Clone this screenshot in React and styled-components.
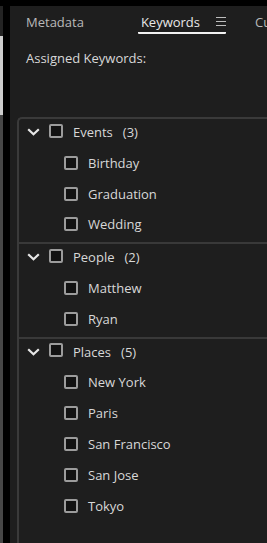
import React from "react";
import styled, { createGlobalStyle } from "styled-components";

const Global = createGlobalStyle`
  html, body { margin: 0; padding: 0; background: #000; }
  body { font-family: "Open Sans", "Noto Sans", sans-serif; }
  * { box-sizing: border-box; }
`;

const Page = styled.div`
  display: flex;
  height: 543px;
  padding-top: 6px;
  background: #000;
  overflow: hidden;
`;

const ScrollStrip = styled.div`
  width: 3px;
  display: flex;
  flex-direction: column;
  margin-right: 7px;
`;

const StripPart = styled.div`
  height: ${(p) => (p.$h ? `${p.$h}px` : "auto")};
  flex: ${(p) => (p.$h ? "none" : "1")};
  background: ${(p) => p.$c};
`;

const Panel = styled.div`
  flex: 1;
  min-width: 0;
  background: #1e1e1e;
  display: flex;
  flex-direction: column;
  overflow: hidden;
`;

const TabBar = styled.div`
  height: 28px;
  display: flex;
  align-items: stretch;
  padding-left: 16px;
  white-space: nowrap;
`;

const Tab = styled.div`
  display: flex;
  align-items: center;
  gap: 16px;
  height: 28px;
  padding: 5px 0 0 ${(p) => (p.$active ? "3px" : "0")};
  margin-right: ${(p) => p.$mr || 0}px;
  font-size: 13px;
  color: ${(p) => (p.$active ? "#e8e8e8" : "#b9b9b9")};
  border-bottom: 2px solid ${(p) => (p.$active ? "#f2f2f2" : "transparent")};
  border-radius: 1px;
`;

const Menu = styled.svg`
  display: block;
  flex: none;
`;

const Assigned = styled.div`
  height: 83px;
  padding: 15px 16px 0;
  font-size: 13px;
  color: #d8d8d8;
`;

const TreeBox = styled.div`
  flex: 1;
  margin-left: 7px;
  margin-right: -20px;
  border-top: 2px solid #3a3a3a;
  border-left: 2px solid #3a3a3a;
  border-top-left-radius: 5px;
  background: #1e1e1e;
`;

const Group = styled.div`
  border-top: ${(p) => (p.$first ? "none" : "2px solid #393939")};
`;

const Row = styled.div`
  height: 30.8px;
  padding: 0 0 4.7px ${(p) => (p.$child ? "45px" : "8px")};
  display: flex;
  align-items: center;
  font-size: 13px;
  color: #d8d8d8;
  white-space: nowrap;
`;

const Chevron = styled.svg`
  display: block;
  flex: none;
  margin-right: 9px;
`;

const Check = styled.span`
  flex: none;
  width: 14px;
  height: 14px;
  border: 2px solid #9c9c9c;
  border-radius: 2px;
  background: #121212;
  margin-right: 10px;
  margin-bottom: ${(p) => (p.$header ? "3px" : "0")};
`;

const Count = styled.span`
  margin-left: 10px;
`;

const groups = [
  { name: "Events", items: ["Birthday", "Graduation", "Wedding"] },
  { name: "People", items: ["Matthew", "Ryan"] },
  { name: "Places", items: ["New York", "Paris", "San Francisco", "San Jose", "Tokyo"] },
];

export default function App() {
  return (
    <>
      <Global />
      <Page>
        <ScrollStrip>
          <StripPart $h={30} $c="#232323" />
          <StripPart $h={79} $c="#cdcdcd" />
          <StripPart $c="#474747" />
        </ScrollStrip>
        <Panel>
          <TabBar>
            <Tab $mr={54}>Metadata</Tab>
            <Tab $active $mr={29}>
              Keywords
              <Menu width="10" height="9" viewBox="0 0 10 9">
                <path d="M0 0.5H10M0 4.5H10M0 8.5H10" stroke="#bdbdbd" strokeWidth="1" />
              </Menu>
            </Tab>
            <Tab>Cu</Tab>
          </TabBar>
          <Assigned>Assigned Keywords:</Assigned>
          <TreeBox>
            {groups.map((g, i) => (
              <Group key={g.name} $first={i === 0}>
                <Row>
                  <Chevron width="13" height="8" viewBox="0 0 13 8">
                    <path d="M1.2 1.3L6.5 6.3L11.8 1.3" fill="none" stroke="#e6e6e6" strokeWidth="2.2" />
                  </Chevron>
                  <Check $header />
                  {g.name}
                  <Count>({g.items.length})</Count>
                </Row>
                {g.items.map((it) => (
                  <Row $child key={it}>
                    <Check />
                    {it}
                  </Row>
                ))}
              </Group>
            ))}
          </TreeBox>
        </Panel>
      </Page>
    </>
  );
}
